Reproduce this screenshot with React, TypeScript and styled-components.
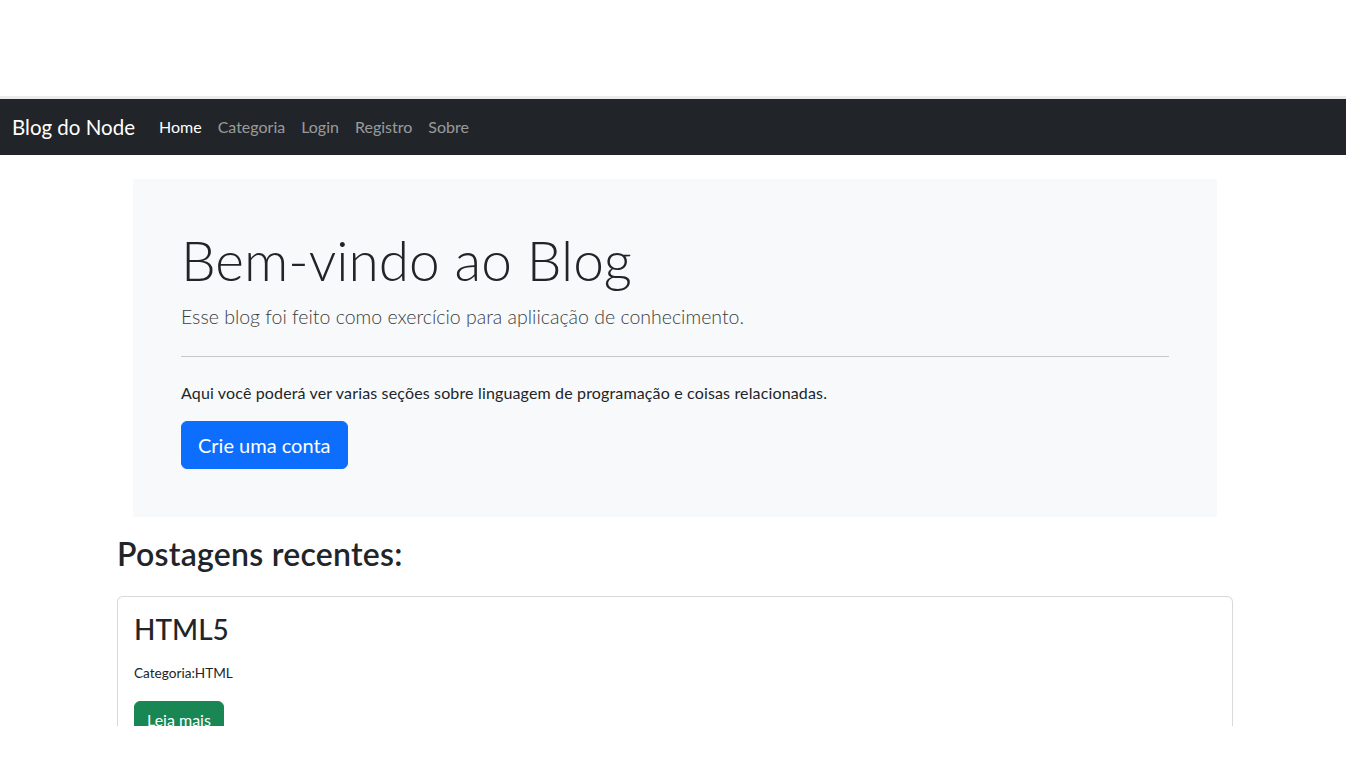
import React from "react";
import styled, { createGlobalStyle } from "styled-components";

const Global = createGlobalStyle`
  html, body { margin: 0; padding: 0; background: #fff; }
  body {
    font-family: Lato, "Segoe UI", "Noto Sans", sans-serif;
    color: #212529;
    font-size: 16px;
    line-height: 1.5;
  }
  * { box-sizing: border-box; }
`;

const TopSpace = styled.div`
  height: 96px;
  background: #fff;
`;

const Viewport = styled.div`
  width: 1346px;
  height: 630px;
  border-top: 3px solid #ebebeb;
  overflow: hidden;
  background: #fff;
`;

const Navbar = styled.nav`
  height: 56px;
  background: #212529;
  display: flex;
  align-items: center;
  padding: 0 12px;
`;

const Brand = styled.a`
  color: #fff;
  font-size: 20.5px;
  line-height: 30px;
  margin-right: 16px;
  text-decoration: none;
`;

const NavList = styled.div`
  display: flex;
  align-items: center;
`;

const NavLink = styled.a<{ $active?: boolean }>`
  color: ${(p) => (p.$active ? "#ffffff" : "rgba(255,255,255,0.55)")};
  padding: 8px;
  font-size: 16px;
  line-height: 24px;
  text-decoration: none;
`;

const Container = styled.main`
  width: 1140px;
  margin-left: 105px;
  padding: 0 12px;
`;

const Jumbo = styled.section`
  background: #f8f9fa;
  margin: 24px 16px 18px;
  padding: 48px;
`;

const Display = styled.h1`
  font-size: 55px;
  font-weight: 300;
  line-height: 67px;
  margin: 0 0 8px;
`;

const Lead = styled.p`
  font-size: 19.5px;
  font-weight: 300;
  color: #3a3e42;
  margin: 0 0 24px;
  line-height: 30px;
`;

const Rule = styled.hr`
  margin: 0 0 24px;
  border: 0;
  border-top: 1px solid #c8c9ca;
`;

const Text = styled.p`
  margin: 0 0 16px;
  font-size: 16px;
  letter-spacing: 0.15px;
`;

const Button = styled.a<{ $variant: "primary" | "success"; $size?: "lg" }>`
  display: inline-block;
  background: ${(p) => (p.$variant === "primary" ? "#0d6efd" : "#198754")};
  border: 1px solid ${(p) => (p.$variant === "primary" ? "#0d6efd" : "#198754")};
  color: #fff;
  text-decoration: none;
  font-size: ${(p) => (p.$size === "lg" ? "20px" : "16px")};
  line-height: 1.5;
  padding: ${(p) => (p.$size === "lg" ? "8px 16px" : "6px 12px")};
  border-radius: 6px;
`;

const SectionTitle = styled.h2`
  font-size: 32px;
  font-weight: 600;
  line-height: 1.2;
  letter-spacing: 0.25px;
  margin: 0 0 23px;
`;

const Card = styled.article`
  border: 1px solid rgba(0, 0, 0, 0.15);
  border-radius: 6px;
  padding: 16px;
  background: #fff;
`;

const CardTitle = styled.h3`
  font-size: 28px;
  font-weight: 500;
  line-height: 1.2;
  margin: 0 0 16px;
`;

const Small = styled.small`
  display: block;
  font-size: 13.6px;
  line-height: 21px;
  margin-bottom: 17px;
`;

export default function App() {
  return (
    <>
      <Global />
      <TopSpace />
      <Viewport>
        <Navbar>
          <Brand href="#">Blog do Node</Brand>
          <NavList>
            <NavLink $active href="#">Home</NavLink>
            <NavLink href="#">Categoria</NavLink>
            <NavLink href="#">Login</NavLink>
            <NavLink href="#">Registro</NavLink>
            <NavLink href="#">Sobre</NavLink>
          </NavList>
        </Navbar>
        <Container>
          <Jumbo>
            <Display>Bem-vindo ao Blog</Display>
            <Lead>Esse blog foi feito como exercício para apliicação de conhecimento.</Lead>
            <Rule />
            <Text>Aqui você poderá ver varias seções sobre linguagem de programação e coisas relacionadas.</Text>
            <Button $variant="primary" $size="lg" href="#">Crie uma conta</Button>
          </Jumbo>
          <SectionTitle>Postagens recentes:</SectionTitle>
          <Card>
            <CardTitle>HTML5</CardTitle>
            <Small>Categoria:HTML</Small>
            <Button $variant="success" href="#">Leia mais</Button>
          </Card>
        </Container>
      </Viewport>
    </>
  );
}
